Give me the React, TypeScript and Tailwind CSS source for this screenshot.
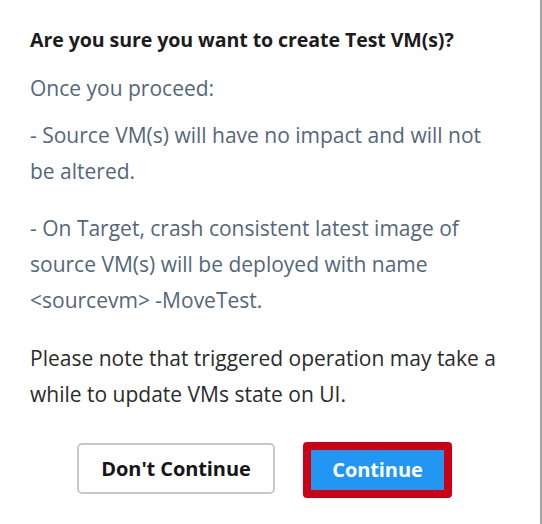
export default function App() {
  return (
    <div className="h-[524px] w-[542px] overflow-hidden bg-white">
      <div className="flex h-full w-[542px] flex-col border-r-2 border-[#a3a3a3] pl-[30px] pr-[10px] pt-[22px] font-['Open_Sans',sans-serif] leading-[36px]">
        <p className="text-[19.6px] font-bold tracking-[-0.1px] text-[#1c1c1c]">Are you sure you want to create Test VM(s)?</p>
        <div className="mt-[12px] text-[21px] text-[#55667c]">
          <p>Once you proceed:</p>
          <p className="mt-[11px]">
            - Source VM(s) will have no impact and will not
            <br />
            be altered.
          </p>
          <p className="mt-[21px]">
            - On Target, crash consistent latest image of
            <br />
            source VM(s) will be deployed with name
            <br />
            &lt;sourcevm&gt; -MoveTest.
          </p>
        </div>
        <p className="mt-[22px] text-[21px] text-[#2b2b2b]">
          Please note that triggered operation may take a
          <br />
          while to update VMs state on UI.
        </p>
        <div className="mt-[30px] flex items-start gap-[28px] pl-[47px]">
          <button className="mt-[1px] h-[51px] w-[198px] rounded-[5px] border-2 border-[#c4c9d0] bg-white text-[20px] font-bold tracking-[-0.1px] text-[#161616]">
            Don't Continue
          </button>
          <div className="rounded-[4px] bg-[#cc0014] p-[8px]">
            <button className="h-[40px] w-[133px] bg-[#2196f3] text-[20px] font-bold tracking-[-0.1px] text-white">Continue</button>
          </div>
        </div>
      </div>
    </div>
  );
}
